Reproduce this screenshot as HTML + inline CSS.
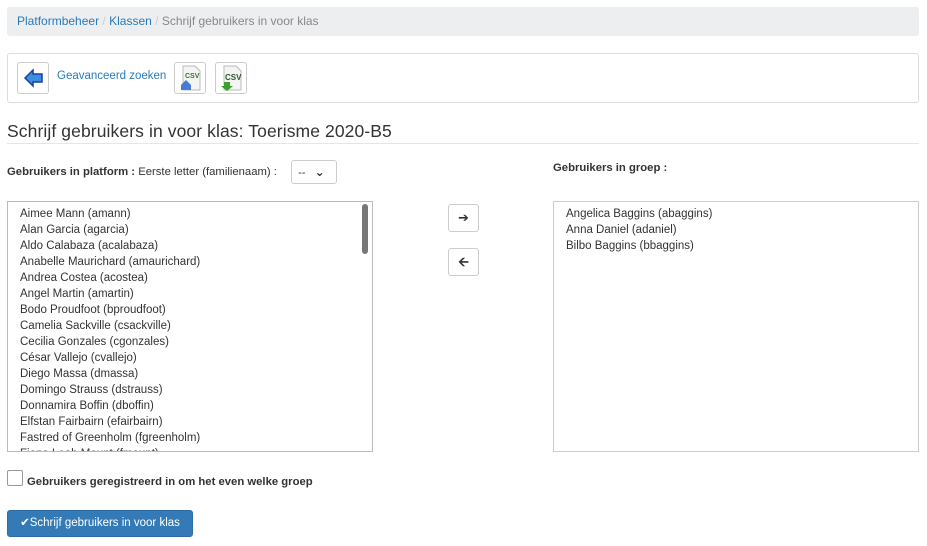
<!DOCTYPE html>
<html><head><meta charset="utf-8"><style>
body{margin:0;width:927px;height:546px;overflow:hidden;background:#fff;font-family:"Liberation Sans","DejaVu Sans",sans-serif;font-size:11px;color:#333;position:relative}
.a{position:absolute}
.bc{left:7px;top:7px;width:912px;height:29px;background:#eceeef;border-radius:3px;font-size:12px;line-height:29px}
.bc span{color:#2a7ab8}
.tb{left:7px;top:53px;width:910px;height:48px;border:1px solid #ddd;border-radius:3px}
.ib{position:absolute;width:30px;height:30px;border:1px solid #ccc;border-radius:3px;background:#fff}
h1{position:absolute;left:7px;top:121px;margin:0;font-weight:normal;font-size:17.5px;color:#333;letter-spacing:0.1px}
.hr{left:7px;top:143px;width:912px;height:1px;background:#e5e5e5}
.lst{border:1px solid #bbb;font-size:11.5px;line-height:16px;padding:4px 12px;box-sizing:border-box;overflow:hidden}
.btn{position:absolute;width:29px;height:26px;border:1px solid #ccc;border-radius:3px;background:#fff;text-align:center;line-height:26px;font-weight:bold;font-size:13px}
</style></head><body>
<div class="a bc">&nbsp;&nbsp;&nbsp;<span>Platformbeheer</span> <span style="color:#ccc">/</span> <span>Klassen</span> <span style="color:#ccc">/</span> <span style="color:#888">Schrijf gebruikers in voor klas</span></div>
<div class="a tb">
<div class="ib" style="left:9px;top:8px"><svg width="30" height="30"><path d="M7 15 L15 7 V11 H24 V19 H15 V23 Z" fill="#3a8fe0" stroke="#1a3fa0" stroke-width="1.5"/></svg></div>
<div class="a" style="left:49px;top:16px;color:#2a7ab8;font-size:11.5px">Geavanceerd zoeken</div>
<div class="ib" style="left:166px;top:8px"><svg width="30" height="30"><path d="M8 3H20L25 8V27H8Z" fill="#f4f4f4" stroke="#bbb"/><text x="10" y="15" font-size="7" font-weight="bold" fill="#2a7a2a">CSV</text><path d="M6 22L11 17L16 22V27H6Z" fill="#4a7ad8"/></svg></div>
<div class="ib" style="left:207px;top:8px"><svg width="30" height="30"><path d="M8 3H20L25 8V27H8Z" fill="#f4f4f4" stroke="#bbb"/><text x="9" y="17" font-size="8" font-weight="bold" fill="#2a5a2a">CSV</text><path d="M8 19H14V23H17L11 28L5 23H8Z" fill="#3aa030"/></svg></div>
</div>
<h1>Schrijf gebruikers in voor klas: Toerisme 2020-B5</h1>
<div class="a hr"></div>
<div class="a" style="left:7px;top:166px;font-size:11.3px"><b>Gebruikers in platform :</b> Eerste letter (familienaam) :</div>
<div class="a" style="left:291px;top:160px;width:44px;height:22px;border:1px solid #ccc;border-radius:3px;line-height:22px">&nbsp;&nbsp;--&nbsp;&nbsp;&nbsp;<b style="font-size:12px">&#8964;</b></div>
<div class="a" style="left:553px;top:162px;font-size:11.3px"><b>Gebruikers in groep :</b></div>
<div class="a lst" style="left:7px;top:201px;width:366px;height:251px">Aimee Mann (amann)<br>Alan Garcia (agarcia)<br>Aldo Calabaza (acalabaza)<br>Anabelle Maurichard (amaurichard)<br>Andrea Costea (acostea)<br>Angel Martin (amartin)<br>Bodo Proudfoot (bproudfoot)<br>Camelia Sackville (csackville)<br>Cecilia Gonzales (cgonzales)<br>César Vallejo (cvallejo)<br>Diego Massa (dmassa)<br>Domingo Strauss (dstrauss)<br>Donnamira Boffin (dboffin)<br>Elfstan Fairbairn (efairbairn)<br>Fastred of Greenholm (fgreenholm)<br>Fiona Leah Mount (fmount)</div>
<div class="a" style="left:362px;top:204px;width:6px;height:50px;background:#777;border-radius:3px"></div>
<div class="a lst" style="left:553px;top:201px;width:366px;height:251px;border-color:#ccc">Angelica Baggins (abaggins)<br>Anna Daniel (adaniel)<br>Bilbo Baggins (bbaggins)</div>
<div class="btn" style="left:448px;top:204px">&#10132;</div>
<div class="btn" style="left:448px;top:248px">&#129128;</div>
<div class="a" style="left:7px;top:470px;width:14px;height:14px;border:1px solid #999;border-radius:2px"></div>
<div class="a" style="left:27px;top:476px;font-size:11.3px"><b>Gebruikers geregistreerd in om het even welke groep</b></div>
<div class="a" style="left:7px;top:510px;width:184px;height:25px;background:#337ab7;border:1px solid #2e6da4;border-radius:3px;color:#fff;line-height:25px;text-align:center;font-size:11.5px">&#10004;Schrijf gebruikers in voor klas</div>
</body></html>
